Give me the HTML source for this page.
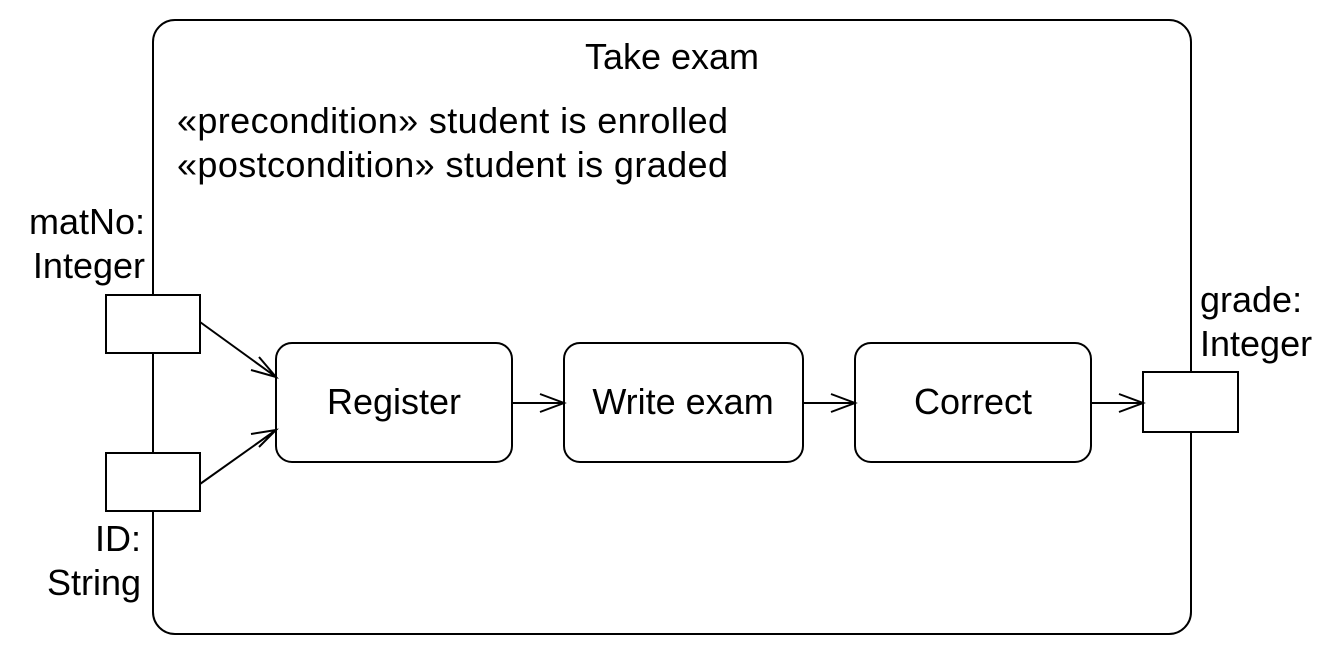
<!DOCTYPE html>
<html><head><style>body{margin:0;background:#fff}</style></head><body>
<svg width="1328" height="656" xmlns="http://www.w3.org/2000/svg" font-family="Liberation Sans, Arial, sans-serif" font-size="36" fill="#000">
<rect width="1328" height="656" fill="#fff"/>
<g fill="none" stroke="#000" stroke-width="2">
<rect x="153" y="20" width="1038" height="614" rx="22"/>
<rect x="106" y="295" width="94" height="58" fill="#fff"/>
<rect x="106" y="453" width="94" height="58" fill="#fff"/>
<rect x="1143" y="372" width="95" height="60" fill="#fff"/>
<rect x="276" y="343" width="236" height="119" rx="16"/>
<rect x="564" y="343" width="239" height="119" rx="16"/>
<rect x="855" y="343" width="236" height="119" rx="16"/>
<path d="M200 322 L276 377 M259 357 L276 377 L251 370"/>
<path d="M200 484 L276 430 M251 434 L276 430 L259 447"/>
<path d="M512 403 H564 M540 394 L564 403 L540 412"/>
<path d="M803 403 H855 M831 394 L855 403 L831 412"/>
<path d="M1091 403 H1143 M1119 394 L1143 403 L1119 412"/>
</g>
<text x="672" y="69" text-anchor="middle">Take exam</text>
<text x="177" y="133" textLength="551">«precondition» student is enrolled</text>
<text x="177" y="177" textLength="551">«postcondition» student is graded</text>
<text x="145" y="234" text-anchor="end">matNo:</text>
<text x="145" y="278" text-anchor="end">Integer</text>
<text x="141" y="551" text-anchor="end">ID:</text>
<text x="141" y="595" text-anchor="end">String</text>
<text x="1200" y="312">grade:</text>
<text x="1200" y="356">Integer</text>
<text x="394" y="414" text-anchor="middle">Register</text>
<text x="683" y="414" text-anchor="middle">Write exam</text>
<text x="973" y="414" text-anchor="middle">Correct</text>
</svg>
</body></html>
